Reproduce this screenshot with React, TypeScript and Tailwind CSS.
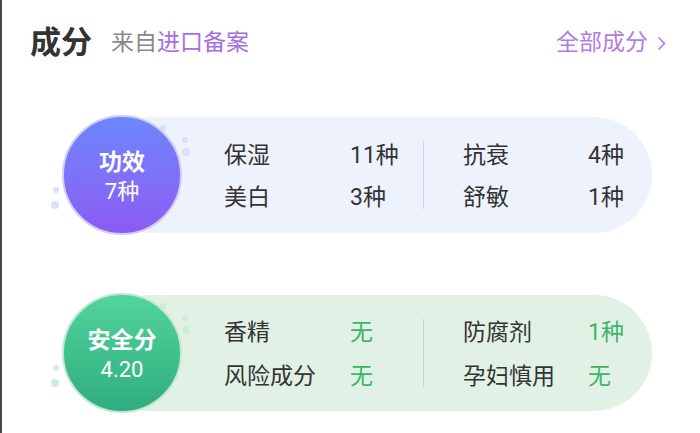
import React from 'react';

type Item = { label: string; value: string };

type Theme = {
  cardBg: string;
  circle: string;
  dot: string;
  divider: string;
  value: string;
};

const FONT = "font-['Roboto','Noto_Sans_CJK_SC',sans-serif]";

const blueTheme: Theme = {
  cardBg: 'bg-[#edf2fd]',
  circle: 'bg-gradient-to-b from-[#6c86fb] to-[#8a5bf4] border-[#d0cbf8]',
  dot: 'bg-[#d9e1f8]',
  divider: 'bg-[#c9d3ea]',
  value: 'text-[#333333]',
};

const greenTheme: Theme = {
  cardBg: 'bg-[#e2f1e5]',
  circle: 'bg-gradient-to-b from-[#52d49c] to-[#2fad80] border-[#c2e8d0]',
  dot: 'bg-[#cdecd9]',
  divider: 'bg-[#b9dcc5]',
  value: 'text-[#3db46d]',
};

const Badge = ({ theme, title, sub }: { theme: Theme; title: string; sub: string }) => (
  <div className="relative z-10 h-[120px] w-[120px] shrink-0">
    {/* decorative dots */}
    <span className={`absolute left-[98px] top-[10px] h-[6px] w-[6px] rounded-full ${theme.dot}`} />
    <span className={`absolute left-[120px] top-[22px] h-[6px] w-[6px] rounded-full ${theme.dot}`} />
    <span className={`absolute left-[120px] top-[33px] h-[8px] w-[8px] rounded-full ${theme.dot}`} />
    <span className={`absolute left-[-9px] top-[72px] h-[6px] w-[6px] rounded-full ${theme.dot}`} />
    <span className={`absolute left-[-11px] top-[86px] h-[8px] w-[8px] rounded-full ${theme.dot}`} />
    <div
      className={`relative flex h-full w-full flex-col items-center justify-center rounded-full border-2 pt-[3px] text-white ${theme.circle}`}
    >
      <span className="text-[23px] font-bold leading-[29px]">{title}</span>
      <span className="text-[22px] leading-[29px]">{sub}</span>
    </div>
  </div>
);

const Column = ({ items, theme, labelW, rowH }: { items: Item[]; theme: Theme; labelW: string; rowH: string }) => (
  <div className={`grid ${labelW}`}>
    {items.map(item => (
      <React.Fragment key={item.label}>
        <span className={`${rowH} flex items-center text-[#333333]`}>{item.label}</span>
        <span className={`${rowH} flex items-center ${theme.value}`}>{item.value}</span>
      </React.Fragment>
    ))}
  </div>
);

const Card = ({
  theme,
  title,
  sub,
  left,
  right,
  rowH,
}: {
  theme: Theme;
  title: string;
  sub: string;
  left: Item[];
  right: Item[];
  rowH: string;
}) => (
  <div className="flex items-center pl-[60px] pr-[48px]">
    <Badge theme={theme} title={title} sub={sub} />
    <div
      className={`-ml-[39px] flex h-[116px] flex-1 items-center rounded-r-full pl-[81px] text-[23px] ${theme.cardBg}`}
    >
      <div className="pt-[5px]">
        <Column items={left} theme={theme} labelW="grid-cols-[126px_73px]" rowH={rowH} />
      </div>
      <div className={`h-[68px] w-px ${theme.divider}`} />
      <div className="ml-[39px] pt-[5px]">
        <Column items={right} theme={theme} labelW="grid-cols-[125px_auto]" rowH={rowH} />
      </div>
    </div>
  </div>
);

export default function App() {
  return (
    <div className={`h-[433px] w-[700px] overflow-hidden border-l-2 border-[#4a4a4a] bg-white ${FONT}`}>
      <div className="mt-[25px] flex h-[36px] items-center justify-between pl-[28px] pr-[34px]">
        <div className="flex items-center">
          <h1 className="text-[31px] font-bold text-[#333333]">成分</h1>
          <span className="ml-[19px] text-[23px] text-[#888888]">
            来自<span className="text-[#a66ee3]">进口备案</span>
          </span>
        </div>
        <div className="flex items-center text-[23px] text-[#b27ce6]">
          全部成分
          <svg className="ml-[9px]" width="9" height="15" viewBox="0 0 9 15" fill="none">
            <path d="M1.5 1.5 L7.5 7.5 L1.5 13.5" stroke="#b27ce6" strokeWidth="1.6" />
          </svg>
        </div>
      </div>

      <div className="mt-[54px]">
        <Card
          theme={blueTheme}
          title="功效"
          sub="7种"
          rowH="h-[42px]"
          left={[
            { label: '保湿', value: '11种' },
            { label: '美白', value: '3种' },
          ]}
          right={[
            { label: '抗衰', value: '4种' },
            { label: '舒敏', value: '1种' },
          ]}
        />
      </div>

      <div className="mt-[58px]">
        <Card
          theme={greenTheme}
          title="安全分"
          sub="4.20"
          rowH="h-[44px]"
          left={[
            { label: '香精', value: '无' },
            { label: '风险成分', value: '无' },
          ]}
          right={[
            { label: '防腐剂', value: '1种' },
            { label: '孕妇慎用', value: '无' },
          ]}
        />
      </div>
    </div>
  );
}
